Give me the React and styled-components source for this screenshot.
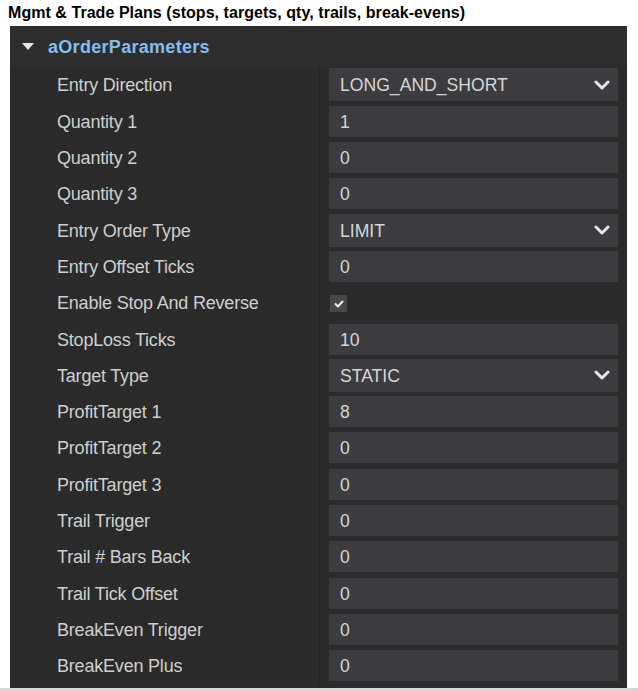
import React from "react";
import styled, { createGlobalStyle } from "styled-components";

const Global = createGlobalStyle`
  html, body { margin: 0; padding: 0; background: #ffffff; }
  body { font-family: "Liberation Sans", Arial, sans-serif; }
`;

const Page = styled.div`
  width: 638px;
  height: 691px;
  display: flex;
  flex-direction: column;
  overflow: hidden;
`;

const Title = styled.div`
  height: 26px;
  padding: 3px 0 0 8px;
  box-sizing: border-box;
  font: bold 16px/20px "Liberation Sans", Arial, sans-serif;
  color: #000;
  white-space: nowrap;
  letter-spacing: 0.05px;
`;

const Panel = styled.div`
  margin-left: 10px;
  width: 617px;
  height: 662px;
  background: #2b2b2b;
  display: flex;
  flex-direction: column;
`;

const Rule = styled.div`
  height: 3px;
  background: #d6d6d6;
`;

const Header = styled.div`
  height: 40.85px;
  display: flex;
  align-items: center;
  padding: 2px 0 0 12px;
  gap: 14px;
  background: #2e2e2e;
  box-sizing: border-box;
`;

const HeaderText = styled.span`
  font: bold 18px "Liberation Sans", Arial, sans-serif;
  color: #86bdf0;
  letter-spacing: 0.3px;
`;

const Body = styled.div`
  display: grid;
  grid-template-columns: 309px 1px 1fr;
`;

const Labels = styled.div`
  display: flex;
  flex-direction: column;
`;

const Divider = styled.div`
  background: #242424;
`;

const Values = styled.div`
  display: flex;
  flex-direction: column;
  padding: 0 9px 0 9px;
`;

const LabelCell = styled.div`
  height: 36.3px;
  display: flex;
  align-items: center;
  padding: 2px 0 0 47px;
  box-sizing: border-box;
  font: 18px "Liberation Sans", Arial, sans-serif;
  color: #cfcfcf;
  letter-spacing: -0.2px;
  white-space: nowrap;
`;

const ValueCell = styled.div`
  height: 36.3px;
  display: flex;
  align-items: center;
`;

const Box = styled.div`
  flex: 1;
  height: ${(p) => (p.$select ? 33 : 31)}px;
  background: #3c3c41;
  display: flex;
  align-items: center;
  justify-content: space-between;
  padding: 2px 8px 0 11px;
  box-sizing: border-box;
  font: 17.6px "Liberation Sans", Arial, sans-serif;
  color: #d6d6d6;
  white-space: nowrap;
`;

const Check = styled.div`
  width: 17px;
  height: 17px;
  margin: 2px 0 0 1px;
  background: #47474c;
  display: flex;
  align-items: center;
  justify-content: center;
`;

const Triangle = () => (
  <svg width="12" height="8" viewBox="0 0 12 8">
    <path d="M0 0 L12 0 L6 7 Z" fill="#e6e6e6" />
  </svg>
);

const Chevron = () => (
  <svg width="16" height="10" viewBox="0 0 16 10" style={{ marginTop: -2 }}>
    <path
      d="M2 2 L8 8 L14 2"
      fill="none"
      stroke="#e8e8e8"
      strokeWidth="3"
      strokeLinecap="round"
      strokeLinejoin="round"
    />
  </svg>
);

const CheckMark = () => (
  <svg width="10" height="8" viewBox="0 0 10 8">
    <path
      d="M1.5 4 L4 6.5 L8.5 1.5"
      fill="none"
      stroke="#f0f0f0"
      strokeWidth="2"
      strokeLinecap="round"
      strokeLinejoin="round"
    />
  </svg>
);

const rows = [
  { label: "Entry Direction", value: "LONG_AND_SHORT", type: "select" },
  { label: "Quantity 1", value: "1" },
  { label: "Quantity 2", value: "0" },
  { label: "Quantity 3", value: "0" },
  { label: "Entry Order Type", value: "LIMIT", type: "select" },
  { label: "Entry Offset Ticks", value: "0" },
  { label: "Enable Stop And Reverse", type: "check" },
  { label: "StopLoss Ticks", value: "10" },
  { label: "Target Type", value: "STATIC", type: "select" },
  { label: "ProfitTarget 1", value: "8" },
  { label: "ProfitTarget 2", value: "0" },
  { label: "ProfitTarget 3", value: "0" },
  { label: "Trail Trigger", value: "0" },
  { label: "Trail # Bars Back", value: "0" },
  { label: "Trail Tick Offset", value: "0" },
  { label: "BreakEven Trigger", value: "0" },
  { label: "BreakEven Plus", value: "0" },
];

export default function App() {
  return (
    <Page>
      <Global />
      <Title>Mgmt &amp; Trade Plans (stops, targets, qty, trails, break-evens)</Title>
      <Panel>
        <Header>
          <Triangle />
          <HeaderText>aOrderParameters</HeaderText>
        </Header>
        <Body>
          <Labels>
            {rows.map((r) => (
              <LabelCell key={r.label}>{r.label}</LabelCell>
            ))}
          </Labels>
          <Divider />
          <Values>
            {rows.map((r) => (
              <ValueCell key={r.label}>
                {r.type === "check" ? (
                  <Check>
                    <CheckMark />
                  </Check>
                ) : (
                  <Box $select={r.type === "select"}>
                    <span>{r.value}</span>
                    {r.type === "select" && <Chevron />}
                  </Box>
                )}
              </ValueCell>
            ))}
          </Values>
        </Body>
      </Panel>
      <Rule />
    </Page>
  );
}
